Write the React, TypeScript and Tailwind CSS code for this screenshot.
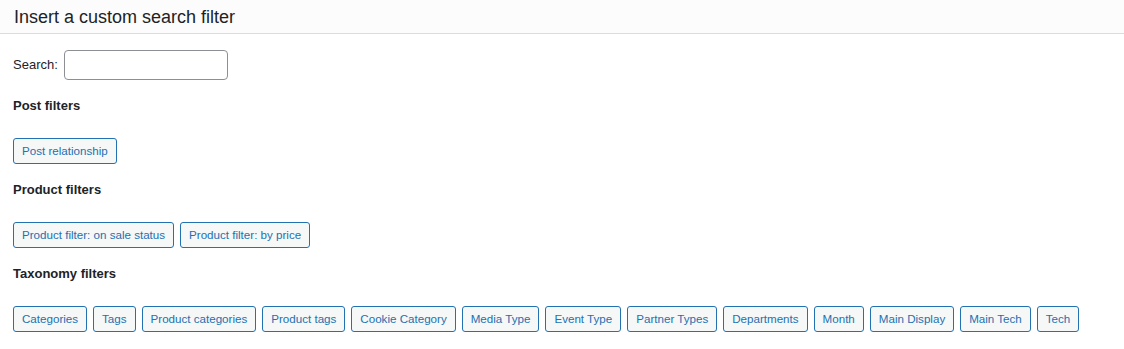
const postFilters = ["Post relationship"];
const productFilters = ["Product filter: on sale status", "Product filter: by price"];
const taxonomyFilters = [
  "Categories",
  "Tags",
  "Product categories",
  "Product tags",
  "Cookie Category",
  "Media Type",
  "Event Type",
  "Partner Types",
  "Departments",
  "Month",
  "Main Display",
  "Main Tech",
  "Tech",
];

function FilterButton({ label }: { label: string }) {
  return (
    <button
      type="button"
      className="inline-flex h-[26px] items-center rounded-[3px] border border-[#2271b1] bg-[#f6f7f7] px-2 text-[11.6px] leading-none text-[#2271b1] hover:bg-[#f0f0f1]"
    >
      {label}
    </button>
  );
}

function Section({ title, items }: { title: string; items: string[] }) {
  return (
    <div className="mt-[17px]">
      <h3 className="h-[18px] text-[13px] font-bold leading-[18px] text-[#1d2327]">{title}</h3>
      <div className="mt-[23px] flex flex-wrap gap-[6px]">
        {items.map((item) => (
          <FilterButton key={item} label={item} />
        ))}
      </div>
    </div>
  );
}

export default function App() {
  return (
    <div className="min-h-[349px] w-full bg-white font-['Liberation_Sans',Arial,sans-serif] text-[#1d2327]">
      <div className="flex h-[34px] items-center border-b border-[#dcdcde] bg-[#fcfcfc] px-[14px]">
        <h1 className="text-[18px] leading-none text-[#1d2327]">Insert a custom search filter</h1>
      </div>

      <div className="px-[13px]">
        <div className="mt-4 flex items-center gap-[6px]">
          <label htmlFor="search" className="text-[13px] text-[#1d2327]">
            Search:
          </label>
          <input
            id="search"
            type="text"
            className="h-[30px] w-[164px] rounded-[4px] border border-[#8c8f94] bg-white px-2 text-[13px] outline-none"
          />
        </div>

        <Section title="Post filters" items={postFilters} />
        <Section title="Product filters" items={productFilters} />
        <Section title="Taxonomy filters" items={taxonomyFilters} />
      </div>
    </div>
  );
}
